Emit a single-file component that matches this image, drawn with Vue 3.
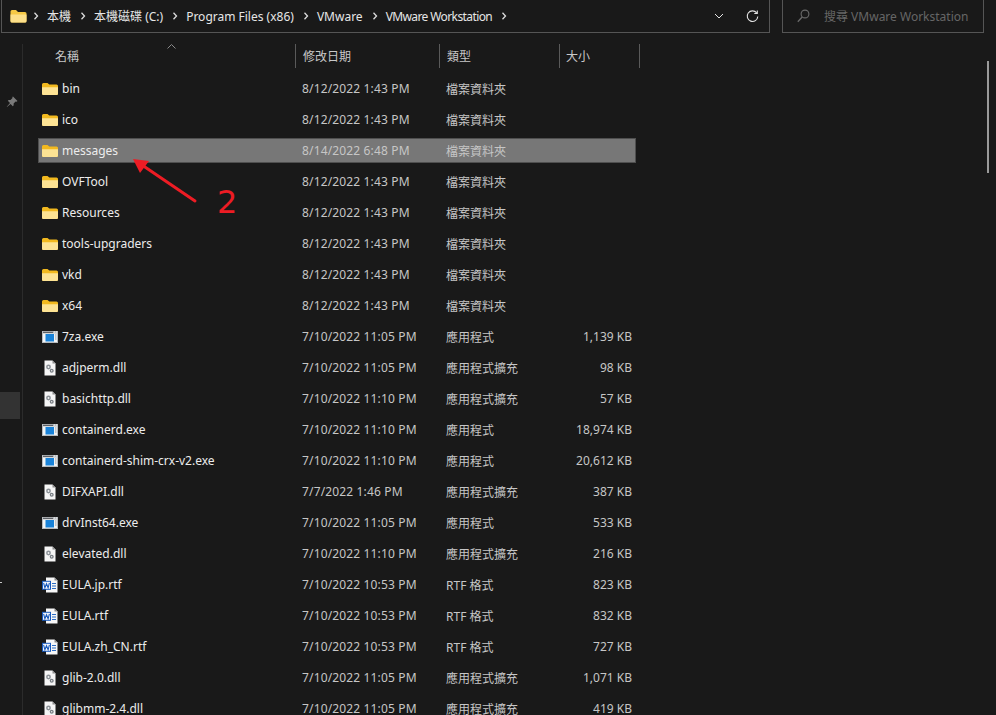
<script setup>
const crumbs = ['本機', '本機磁碟 (C:)', 'Program Files (x86)', 'VMware', 'VMware Workstation']
const d1 = '8/12/2022 1:43 PM'
const folder = '檔案資料夾'
const app = '應用程式'
const ext = '應用程式擴充'
const rtf = 'RTF 格式'
const rows = [
  { icon: 'folder', name: 'bin', date: d1, type: folder, size: '' },
  { icon: 'folder', name: 'ico', date: d1, type: folder, size: '' },
  { icon: 'folder', name: 'messages', date: '8/14/2022 6:48 PM', type: folder, size: '', selected: true },
  { icon: 'folder', name: 'OVFTool', date: d1, type: folder, size: '' },
  { icon: 'folder', name: 'Resources', date: d1, type: folder, size: '' },
  { icon: 'folder', name: 'tools-upgraders', date: d1, type: folder, size: '' },
  { icon: 'folder', name: 'vkd', date: d1, type: folder, size: '' },
  { icon: 'folder', name: 'x64', date: d1, type: folder, size: '' },
  { icon: 'exe', name: '7za.exe', date: '7/10/2022 11:05 PM', type: app, size: '1,139 KB' },
  { icon: 'dll', name: 'adjperm.dll', date: '7/10/2022 11:05 PM', type: ext, size: '98 KB' },
  { icon: 'dll', name: 'basichttp.dll', date: '7/10/2022 11:10 PM', type: ext, size: '57 KB' },
  { icon: 'exe', name: 'containerd.exe', date: '7/10/2022 11:10 PM', type: app, size: '18,974 KB' },
  { icon: 'exe', name: 'containerd-shim-crx-v2.exe', date: '7/10/2022 11:10 PM', type: app, size: '20,612 KB' },
  { icon: 'dll', name: 'DIFXAPI.dll', date: '7/7/2022 1:46 PM', type: ext, size: '387 KB' },
  { icon: 'exe', name: 'drvInst64.exe', date: '7/10/2022 11:05 PM', type: app, size: '533 KB' },
  { icon: 'dll', name: 'elevated.dll', date: '7/10/2022 11:10 PM', type: ext, size: '216 KB' },
  { icon: 'word', name: 'EULA.jp.rtf', date: '7/10/2022 10:53 PM', type: rtf, size: '823 KB' },
  { icon: 'word', name: 'EULA.rtf', date: '7/10/2022 10:53 PM', type: rtf, size: '832 KB' },
  { icon: 'word', name: 'EULA.zh_CN.rtf', date: '7/10/2022 10:53 PM', type: rtf, size: '727 KB' },
  { icon: 'dll', name: 'glib-2.0.dll', date: '7/10/2022 11:05 PM', type: ext, size: '1,071 KB' },
  { icon: 'dll', name: 'glibmm-2.4.dll', date: '7/10/2022 11:05 PM', type: ext, size: '419 KB' },
]
</script>

<template>
  <div class="window">
    <header class="top">
      <div class="address">
        <svg class="crumb-folder" width="17" height="14" viewBox="0 0 17 14">
          <path d="M0.5 2.5a1.5 1.5 0 0 1 1.5-1.5h4l2 2h7a1.5 1.5 0 0 1 1.5 1.5v7.500a1.500 1.500 0 0 1-1.500 1.500h-13a1.500 1.500 0 0 1-1.500-1.500z" fill="#f6c945" />
          <path d="M0.5 5.500h16v6.500a1.500 1.500 0 0 1-1.500 1.500h-13a1.500 1.500 0 0 1-1.500-1.500z" fill="#fde08a" />
        </svg>
        <svg class="sep" width="6" height="8" viewBox="0 0 6 8"><path d="M1.500 0.800l3 3.200-3 3.200" fill="none" stroke="#dcdcdc" stroke-width="1.300" /></svg>
        <template v-for="c in crumbs" :key="c">
          <span class="crumb">{{ c }}</span>
          <svg class="sep" width="6" height="8" viewBox="0 0 6 8"><path d="M1.500 0.800l3 3.200-3 3.200" fill="none" stroke="#dcdcdc" stroke-width="1.300" /></svg>
        </template>
        <div class="addr-tools">
          <svg width="10" height="6" viewBox="0 0 10 6"><path d="M1 1l4 4 4-4" fill="none" stroke="#e4e4e4" stroke-width="1" /></svg>
          <svg width="13" height="13" viewBox="0 0 13 13"><path d="M10.700 2.900a5.300 5.300 0 1 0 1.100 3.600" fill="none" stroke="#e4e4e4" stroke-width="1.100" /><path d="M11.300 0.500v3h-3" fill="none" stroke="#e4e4e4" stroke-width="1.100" /></svg>
        </div>
      </div>
      <div class="search">
        <svg width="13" height="14" viewBox="0 0 13 14"><circle cx="8" cy="5" r="3.900" fill="none" stroke="#6a6a6a" stroke-width="1.100" /><path d="M5.200 8L0.800 12.800" stroke="#6a6a6a" stroke-width="1.300" /></svg>
        <span>搜尋 VMware Workstation</span>
      </div>
    </header>

    <div class="main">
      <aside class="side">
        <svg class="pin" width="12" height="12" viewBox="0 0 12 12"><path d="M7 0.500l4.500 4.500-1 .7-.9-.2-2 2 .1 1.800-.9.900-2.200-2.300L1 11l-.2-.2 3.200-3.800L1.800 4.800l.9-.9 1.800.1 2-2-.2-.9z" fill="#7a7a7a" /></svg>
        <div class="side-active"></div>
        <div class="side-mark"></div>
      </aside>

      <section class="list">
        <div class="head">
          <div class="hcell hname">名稱<svg class="sort" width="9" height="5" viewBox="0 0 9 5"><path d="M.5 4.500l4-4 4 4" fill="none" stroke="#8a8a8a" stroke-width="1" /></svg></div>
          <div class="hcell hdate">修改日期</div>
          <div class="hcell htype">類型</div>
          <div class="hcell hsize">大小</div>
        </div>
        <div v-for="r in rows" :key="r.name" class="row" :class="{ selected: r.selected }">
          <div class="name">
            <svg v-if="r.icon === 'folder'" class="ico" width="16" height="16" viewBox="0 0 16 16">
              <path d="M0 3.500a1.500 1.500 0 0 1 1.500-1.500h4l1.800 1.500h7.200a1.500 1.500 0 0 1 1.500 1.500v7.500a1.500 1.500 0 0 1-1.500 1.500h-13a1.500 1.500 0 0 1-1.500-1.500z" fill="#f2b91f" />
              <path d="M0 6.300h16v6.200a1.500 1.500 0 0 1-1.500 1.500h-13a1.500 1.500 0 0 1-1.500-1.500z" fill="#fde394" />
            </svg>
            <svg v-else-if="r.icon === 'exe'" class="ico" width="16" height="16" viewBox="0 0 16 16">
              <rect x="0" y="2" width="16" height="12" fill="#b9bcbf" />
              <rect x="1" y="4.500" width="14" height="8.500" fill="#f2f4f5" />
              <rect x="1" y="2.800" width="10" height="1.200" fill="#5c6066" />
              <path d="M12 3h1M14 3h1" stroke="#f2f4f5" stroke-width="1" />
              <rect x="3.500" y="5" width="8.500" height="7.500" fill="#1a83d9" />
              <path d="M13 6h1.500M13 8h1.500M13 10h1.500" stroke="#9a9ea3" stroke-width="1" />
            </svg>
            <svg v-else-if="r.icon === 'dll'" class="ico" width="16" height="16" viewBox="0 0 16 16">
              <path d="M2.500 0.500h8l3 3v12h-11z" fill="#f5f5f5" />
              <path d="M10.500 0.500v3h3z" fill="#8c8c8c" />
              <circle cx="6.500" cy="7" r="2.400" fill="#8b9197" />
              <circle cx="6.500" cy="7" r=".9" fill="#f5f5f5" />
              <circle cx="9.700" cy="10.800" r="2" fill="#777d83" />
              <circle cx="9.700" cy="10.800" r=".7" fill="#f5f5f5" />
            </svg>
            <svg v-else class="ico" width="16" height="16" viewBox="0 0 16 16">
              <path d="M4 0.500h8.500l3 3v12h-11.500z" fill="#f7f7f7" />
              <path d="M12.500 0.500v3h3z" fill="#8c8c8c" />
              <path d="M10 6.500h4M10 9h4M10 11.500h4" stroke="#2b6cc4" stroke-width="1.100" />
              <rect x="0" y="3.800" width="9" height="9" fill="#185abd" />
              <rect x="1" y="4.800" width="7" height="7" fill="#f3f6fb" />
              <path d="M1.600 5.800l1.300 5 1.600-4 1.600 4 1.300-5" fill="none" stroke="#185abd" stroke-width="1.100" />
            </svg>
            <span>{{ r.name }}</span>
          </div>
          <div class="date">{{ r.date }}</div>
          <div class="type">{{ r.type }}</div>
          <div class="size">{{ r.size }}</div>
        </div>
      </section>
    </div>

    <div class="scrollbar"></div>

    <svg class="arrow" width="80" height="60" viewBox="0 0 80 60">
      <path d="M63 42L10 6" stroke="#ed1c24" stroke-width="3" stroke-linecap="round" />
      <path d="M1 0L17 2 8 14z" fill="#ed1c24" />
    </svg>
    <span class="two">2</span>
  </div>
</template>

<style scoped>
.window {
  position: relative;
  width: 996px;
  height: 715px;
  overflow: hidden;
  background: #191919;
  color: #e6e6e6;
  font-family: "Noto Sans", "Noto Sans CJK TC", sans-serif;
  font-size: 12px;
  display: flex;
  flex-direction: column;
}
.top {
  display: flex;
  height: 33px;
  flex: none;
}
.address {
  width: 769px;
  box-sizing: border-box;
  border: 1px solid #555;
  border-top: none;
  display: flex;
  align-items: center;
  margin-left: 1px;
  padding-left: 8px;
}
.crumb-folder { margin-right: 3px; }
.sep { flex: none; margin: 0 8px 0 3px; }
.crumb { white-space: nowrap; margin-right: 6px; }
.crumb:nth-last-of-type(1) { letter-spacing: -0.6px; }
.addr-tools {
  margin-left: auto;
  display: flex;
  align-items: center;
  gap: 22px;
  padding-right: 10px;
}
.search {
  width: 202px;
  box-sizing: border-box;
  margin-left: 12px;
  border: 1px solid #555;
  border-top: none;
  display: flex;
  align-items: center;
  gap: 14px;
  padding-left: 14px;
  color: #666;
}
.main {
  flex: 1;
  display: flex;
  min-height: 0;
}
.side {
  position: relative;
  width: 22px;
  flex: none;
  margin-top: 11px;
  border-right: 1px solid #2b2b2b;
}
.pin { position: absolute; left: 6px; top: 52px; }
.side-active {
  position: absolute;
  left: 0;
  top: 348px;
  width: 20px;
  height: 27px;
  background: #333;
}
.side-mark {
  position: absolute;
  left: 0;
  top: 538px;
  width: 2px;
  height: 1px;
  background: #c8c8c8;
}
.list {
  flex: 1;
  padding: 11px 0 0 15px;
}
.head {
  height: 29px;
  display: flex;
}
.hcell {
  box-sizing: border-box;
  height: 24px;
  display: flex;
  align-items: center;
  border-right: 1px solid #5a5a5a;
  color: #c8c8c8;
  position: relative;
}
.hname { width: 258px; padding-left: 17px; }
.hdate { width: 144px; padding-left: 7px; }
.htype { width: 120px; padding-left: 7px; }
.hsize { width: 80px; padding-left: 6px; }
.sort { position: absolute; left: 129px; top: 0; }
.row {
  box-sizing: border-box;
  width: 598px;
  height: 25px;
  margin-bottom: 6px;
  border: 1px solid transparent;
  display: grid;
  grid-template-columns: 263px 144px 90px 1fr;
  align-items: center;
  position: relative;
  top: 3px;
}
.row.selected {
  background: #777;
  border-color: #4f4f4f;
}
.name {
  display: flex;
  align-items: center;
  gap: 4px;
  padding-left: 3px;
  color: #ececec;
}
.ico { flex: none; }
.date { color: #c6c6c6; letter-spacing: 0.15px; }
.type { color: #c6c6c6; }
.size {
  text-align: right;
  color: #c6c6c6;
  padding-right: 3px;
}
.scrollbar {
  position: absolute;
  right: 7px;
  top: 61px;
  width: 2px;
  height: 112px;
  background: #9a9a9a;
}
.arrow {
  position: absolute;
  left: 132px;
  top: 159px;
}
.two {
  position: absolute;
  left: 217px;
  top: 180px;
  font-family: "DejaVu Sans", sans-serif;
  font-size: 32px;
  line-height: 44px;
  color: #ed1c24;
}
</style>
